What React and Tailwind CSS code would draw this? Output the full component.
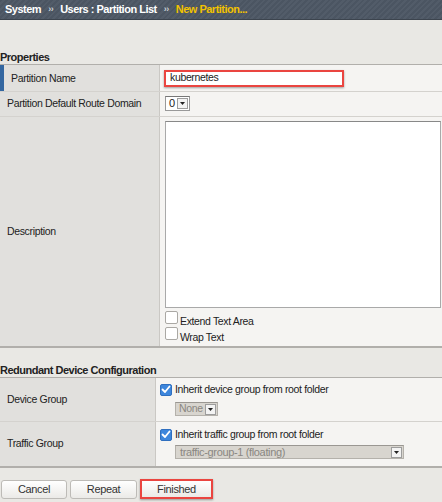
import React from "react";

function Arrow() {
  return (
    <div className="w-[11px] h-[11px] border border-[#9d9d9d] bg-[#f3f3f3] flex items-center justify-center mr-[1px]">
      <svg width="7" height="5" viewBox="0 0 7 5"><path d="M1 1h5L3.5 4z" fill="#222" /></svg>
    </div>
  );
}

function Check({ checked }) {
  if (checked) {
    return (
      <div className="w-[12px] h-[12px] rounded-[2px] bg-[#3d86dc] border border-[#2f6fbf] flex items-center justify-center shrink-0">
        <svg width="10" height="9" viewBox="0 0 10 9"><path d="M1.5 4.5L4 7l4.5-5.5" fill="none" stroke="#fff" strokeWidth="1.8" strokeLinecap="round" strokeLinejoin="round" /></svg>
      </div>
    );
  }
  return <div className="w-[13px] h-[13px] rounded-[2px] bg-white border border-[#aaa8a4] shrink-0" />;
}

export default function App() {
  return (
    <div className="w-[442px] h-[502px] overflow-hidden bg-[#e9e8e4] text-[#222] text-[10.5px] tracking-[-0.35px] font-['Liberation_Sans',Arial,sans-serif]">
      {/* Header */}
      <div className="h-[20px] flex items-center pl-[5px] font-bold text-[11px] text-white tracking-[-0.5px] border-b border-[#3c444e] bg-[repeating-linear-gradient(135deg,#4b5562_0px,#4b5562_2px,#525c69_2px,#525c69_4px)]">
        <span>System</span>
        <span className="text-[#c9cdd2] text-[9px] mx-[7px]">››</span>
        <span>Users : Partition List</span>
        <span className="text-[#c9cdd2] text-[9px] mx-[7px]">››</span>
        <span className="text-[#f2c200]">New Partition...</span>
      </div>

      {/* Properties */}
      <div className="mt-[31px] h-[13px] leading-[13px] font-bold text-[11px] tracking-[-0.5px]">Properties</div>
      <div className="border-t border-[#b1afab] border-b-2 border-b-[#b1afab]">
        <div className="flex h-[27px] border-b border-[#d4d2ce]">
          <div className="w-[160px] shrink-0 bg-[#e1e0dd] border-l-4 border-l-[#3467a0] border-r border-r-[#cac8c4] flex items-center pl-[7px] pt-[1px]">Partition Name</div>
          <div className="flex-1 bg-[#f5f4f2] flex items-center pl-[4px]">
            <div className="w-[180px] h-[17px] border-2 border-[#ea4540] bg-white shadow-[0_1px_2px_rgba(0,0,0,0.35)] flex items-center pl-[4px]">kubernetes</div>
          </div>
        </div>
        <div className="flex h-[25px] border-b border-[#d4d2ce]">
          <div className="w-[160px] shrink-0 bg-[#e1e0dd] border-r border-r-[#cac8c4] flex items-center pl-[7px]">Partition Default Route Domain</div>
          <div className="flex-1 bg-[#f5f4f2] flex items-center pl-[5px]">
            <div className="w-[25px] h-[15px] border border-[#999] border-t-[#777] bg-white flex items-center justify-between pl-[3px] -mt-[2px] text-[11px]">
              <span>0</span>
              <Arrow />
            </div>
          </div>
        </div>
        <div className="flex h-[229px]">
          <div className="w-[160px] shrink-0 bg-[#e1e0dd] border-r border-r-[#cac8c4] flex items-center pl-[7px]">Description</div>
          <div className="flex-1 bg-[#f5f4f2] flex flex-col pl-[5px] pt-[4px]">
            <div className="w-[276px] h-[187px] bg-white border border-[#a9a9a9] border-t-[#888]" />
            <div className="flex items-start mt-[3px] h-[16px]">
              <Check />
              <span className="ml-[2px] mt-[4px] leading-[13px]">Extend Text Area</span>
            </div>
            <div className="flex items-start h-[16px]">
              <Check />
              <span className="ml-[2px] mt-[4px] leading-[13px]">Wrap Text</span>
            </div>
          </div>
        </div>
      </div>

      {/* Redundant Device Configuration */}
      <div className="mt-[15px] h-[14px] leading-[14px] font-bold text-[11px] tracking-[-0.5px]">Redundant Device Configuration</div>
      <div className="border-t border-[#b1afab] border-b-2 border-b-[#b1afab]">
        <div className="flex h-[44px] border-b border-[#d4d2ce]">
          <div className="w-[156px] shrink-0 bg-[#e1e0dd] border-r border-r-[#cac8c4] flex items-center pl-[7px]">Device Group</div>
          <div className="flex-1 bg-[#f5f4f2] flex flex-col pl-[4px] pt-[5px]">
            <div className="flex items-center h-[13px]">
              <Check checked />
              <span className="ml-[3px]">Inherit device group from root folder</span>
            </div>
            <div className="ml-[15px] mt-[6px] w-[43px] h-[14px] border border-[#b4b1ab] border-t-[#9a9792] bg-[#d8d5cf] flex items-center pl-[3px] text-[#8a8782] text-[10.5px]">
              <span className="mr-auto">None</span>
              <Arrow />
            </div>
          </div>
        </div>
        <div className="flex h-[44px]">
          <div className="w-[156px] shrink-0 bg-[#e1e0dd] border-r border-r-[#cac8c4] flex items-center pl-[7px]">Traffic Group</div>
          <div className="flex-1 bg-[#f5f4f2] flex flex-col pl-[4px] pt-[6px]">
            <div className="flex items-center h-[13px]">
              <Check checked />
              <span className="ml-[3px]">Inherit traffic group from root folder</span>
            </div>
            <div className="ml-[15px] mt-[4px] w-[229px] h-[14px] border border-[#b4b1ab] border-t-[#9a9792] bg-[#d8d5cf] flex items-center justify-between pl-[4px] text-[#8a8782] text-[11px]">
              <span>traffic-group-1 (floating)</span>
              <Arrow />
            </div>
          </div>
        </div>
      </div>

      {/* Buttons */}
      <div className="flex items-center mt-[11px] pl-[1px] gap-[3px] text-[11px]">
        <div className="w-[66px] h-[19px] rounded-[3px] border border-[#bdbbb7] bg-[linear-gradient(#ffffff,#ebeae7)] flex items-center justify-center text-[#333]">Cancel</div>
        <div className="w-[67px] h-[19px] rounded-[3px] border border-[#bdbbb7] bg-[linear-gradient(#ffffff,#ebeae7)] flex items-center justify-center text-[#333]">Repeat</div>
        <div className="w-[73px] h-[20px] border-2 border-[#ea4540] bg-[linear-gradient(#ffffff,#ebeae7)] shadow-[0_1px_2px_rgba(0,0,0,0.35)] flex items-center justify-center text-[#333]">Finished</div>
      </div>
    </div>
  );
}
